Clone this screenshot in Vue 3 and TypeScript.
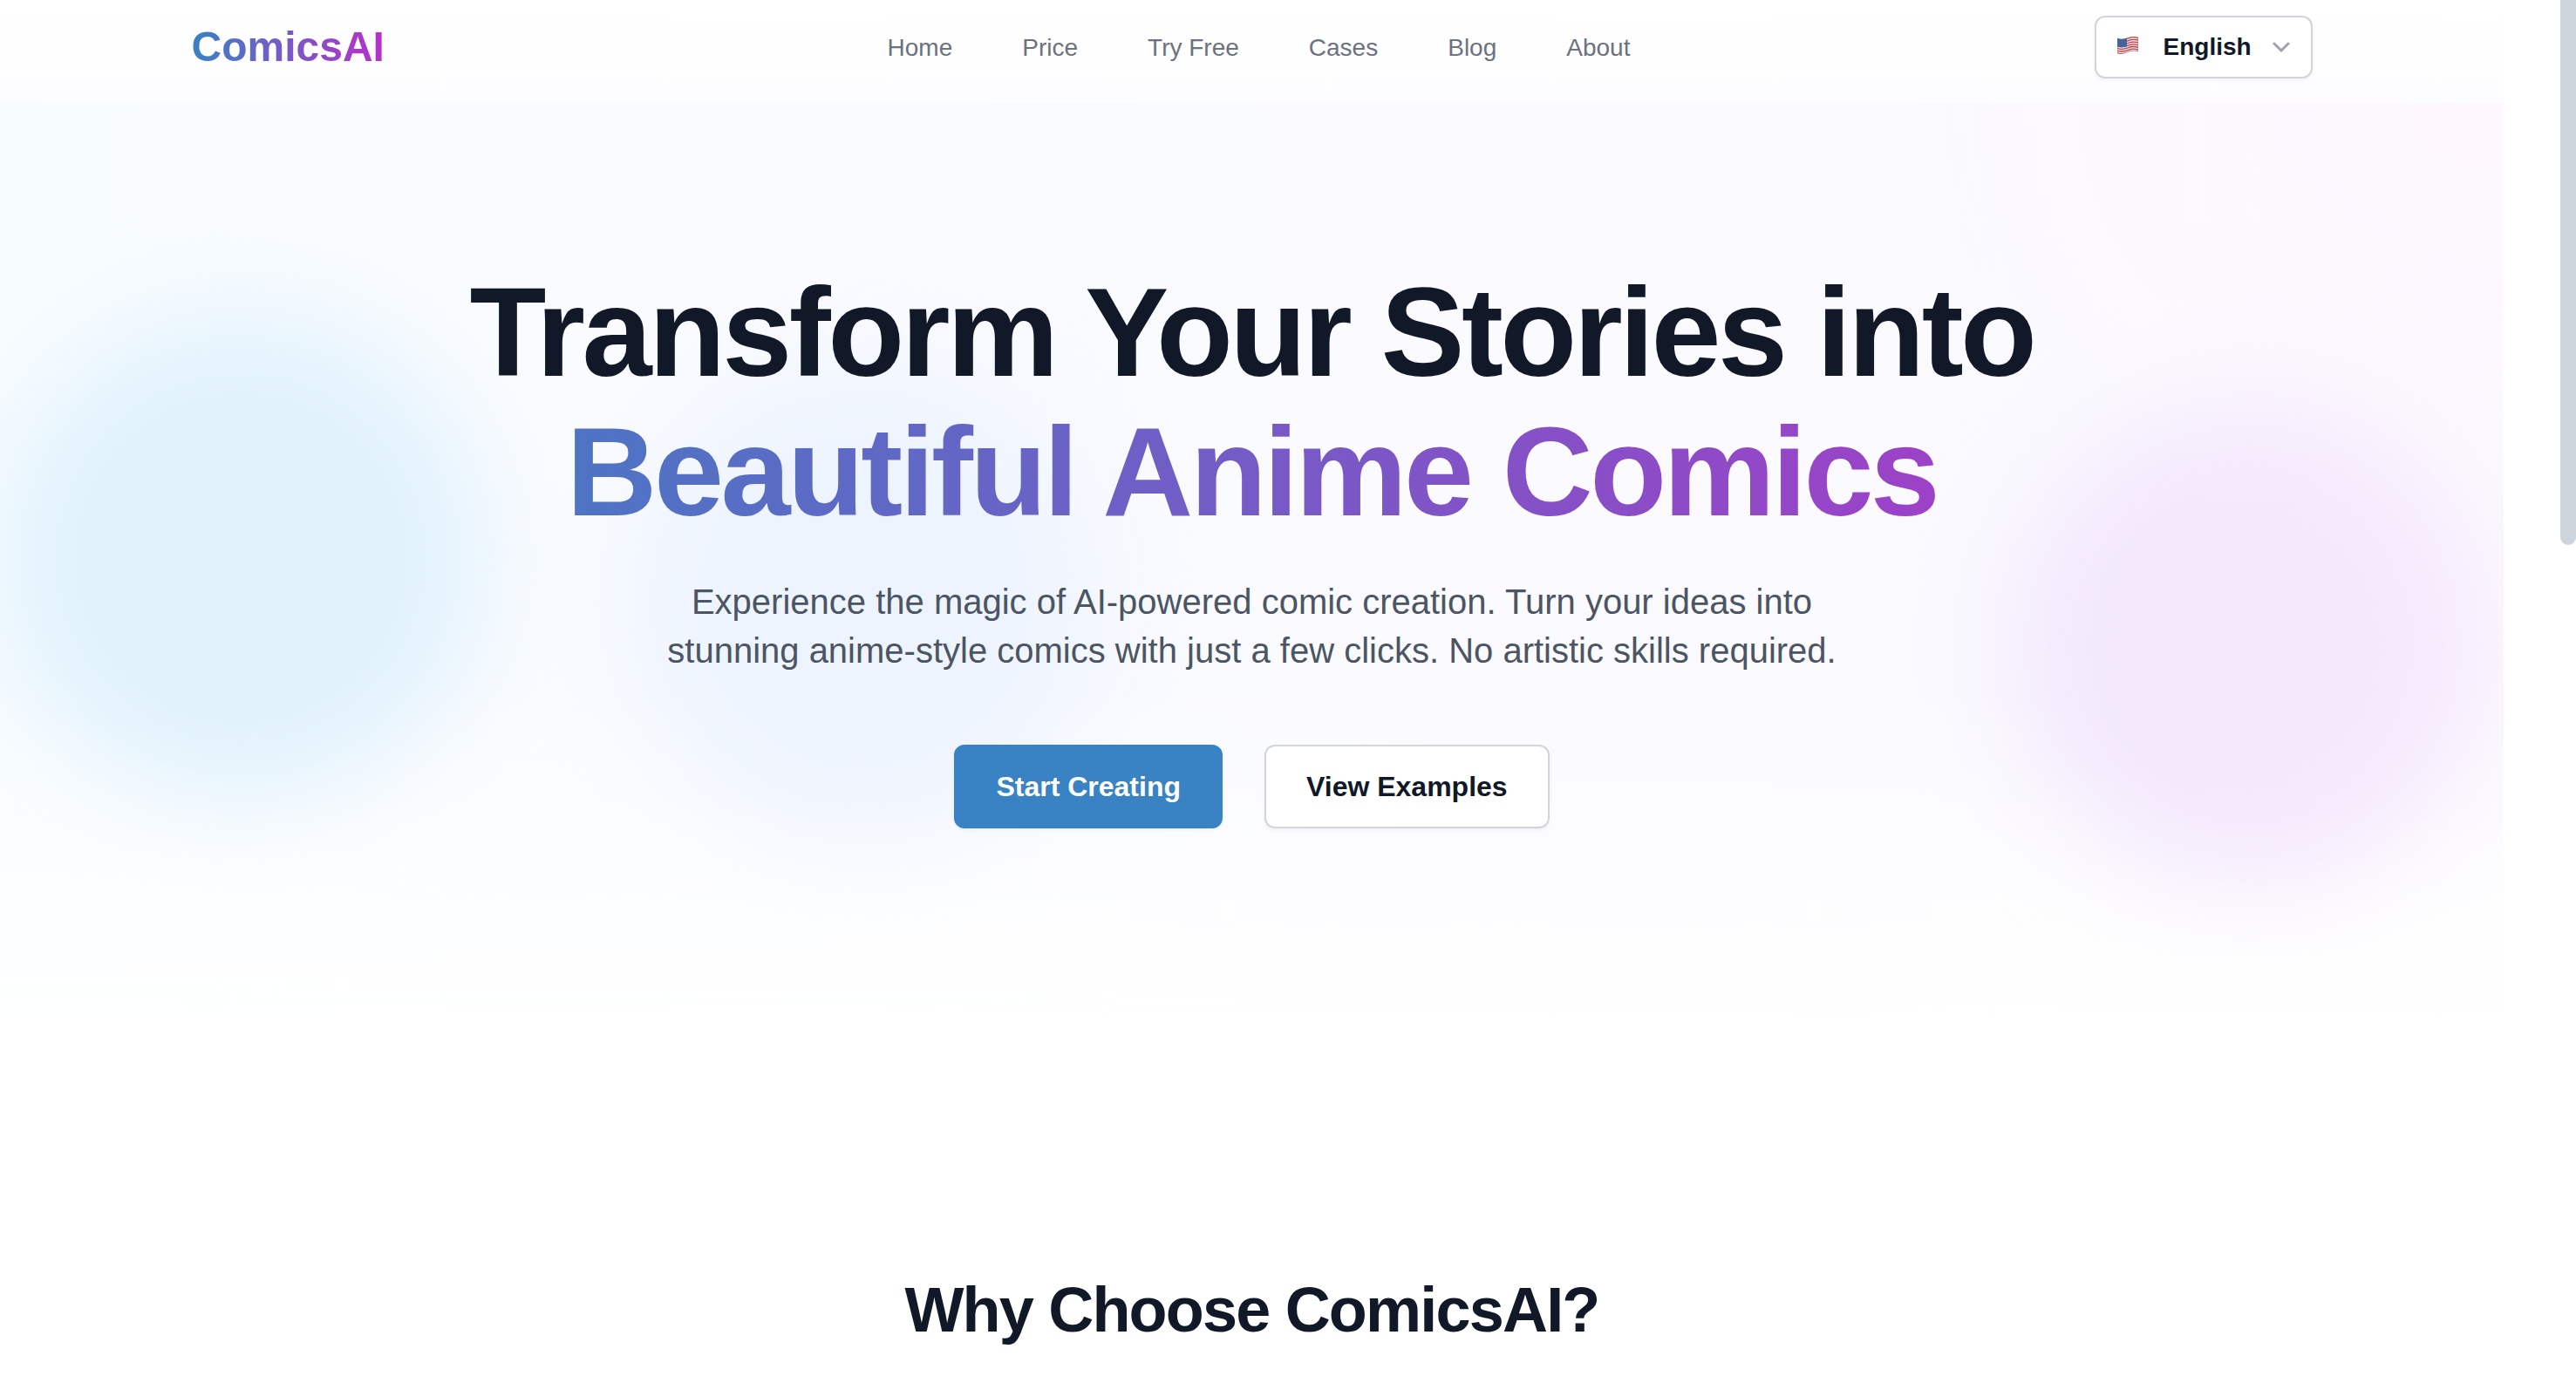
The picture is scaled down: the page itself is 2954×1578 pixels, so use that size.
<script setup lang="ts">
import { ref } from 'vue'

interface NavLink {
  label: string
  href: string
}

const links: NavLink[] = [
  { label: 'Home', href: '#home' },
  { label: 'Price', href: '#price' },
  { label: 'Try Free', href: '#try-free' },
  { label: 'Cases', href: '#cases' },
  { label: 'Blog', href: '#blog' },
  { label: 'About', href: '#about' },
]

const language = ref<string>('en')
const stripes: number[] = [0, 1, 2, 3, 4, 5, 6]
</script>

<template>
  <div class="page">
    <header class="header">
      <div class="bar">
        <a class="logo" href="#home">ComicsAI</a>
        <nav class="nav" aria-label="Main">
          <a v-for="link in links" :key="link.label" :href="link.href">{{ link.label }}</a>
        </nav>
        <label class="language">
          <svg class="flag" viewBox="0 0 24 20" aria-hidden="true">
            <defs>
              <clipPath id="flag-shape">
                <path d="M0 2C4 3.500 8 3 12 1.500S20-.5 24 1V17C20 15.500 16 16 12 17.500S4 20.500 0 19Z" />
              </clipPath>
            </defs>
            <g clip-path="url(#flag-shape)">
              <rect width="24" height="20" fill="#efe6e8" />
              <path
                v-for="n in stripes"
                :key="n"
                :d="`M0 ${2.6 + n * 2.7}C4 ${4.1 + n * 2.7} 8 ${3.6 + n * 2.7} 12 ${2.1 + n * 2.7}S20 ${0.1 + n * 2.7} 24 ${1.6 + n * 2.7}`"
                fill="none"
                stroke="#c9404c"
                stroke-width="1.3"
              />
              <path d="M0 0H11V11.500C7 12.500 4 12.500 0 11.500Z" fill="#41659f" />
            </g>
            <path d="M0 2C4 3.500 8 3 12 1.500S20-.5 24 1V17C20 15.500 16 16 12 17.500S4 20.500 0 19Z" fill="none" stroke="#8a4a55" stroke-opacity=".5" />
          </svg>
          <select v-model="language" aria-label="Language">
            <option value="en">English</option>
          </select>
          <svg class="chevron" viewBox="0 0 20 12" aria-hidden="true">
            <path d="M2 2L10 10L18 2" />
          </svg>
        </label>
      </div>
    </header>

    <main>
      <section class="hero">
        <div class="blob blob-sky"></div>
        <div class="blob blob-indigo"></div>
        <div class="blob blob-pink"></div>
        <div class="hero-content">
          <h1>Transform Your Stories into <span>Beautiful Anime Comics</span></h1>
          <p>
            Experience the magic of AI-powered comic creation. Turn your ideas into stunning
            anime-style comics with just a few clicks. No artistic skills required.
          </p>
          <div class="actions">
            <button type="button" class="button primary">Start Creating</button>
            <button type="button" class="button secondary">View Examples</button>
          </div>
        </div>
      </section>

      <section class="features">
        <h2>Why Choose ComicsAI?</h2>
      </section>
    </main>

    <div class="scroll-thumb" aria-hidden="true"></div>
  </div>
</template>

<style>
body {
  margin: 0;
  background: #ffffff;
}
</style>

<style scoped>
* {
  box-sizing: border-box;
}

.page {
  position: relative;
  min-height: 100vh;
  padding-right: 83px;
  overflow: hidden;
  font-family: 'Liberation Sans', Arial, sans-serif;
  color: #111827;
}

.header {
  background: linear-gradient(to bottom, #ffffff, #fdfdff);
}

.bar {
  display: grid;
  grid-template-columns: 1fr auto 1fr;
  align-items: center;
  max-width: 2560px;
  height: 118px;
  margin: 0 auto;
  padding: 0 64px 10px;
}

.logo {
  justify-self: start;
  font-size: 48px;
  line-height: 64px;
  font-weight: 700;
  text-decoration: none;
  color: transparent;
  background: linear-gradient(to right, #3982c3, #b92fca);
  background-clip: text;
  -webkit-background-clip: text;
}

.nav {
  display: flex;
  gap: 80px;
  margin: 2px 0 0 16px;
}

.nav a {
  font-size: 28px;
  line-height: 40px;
  color: #6b7280;
  text-decoration: none;
}

.language {
  position: relative;
  display: flex;
  align-items: center;
  justify-self: end;
  width: 250px;
  height: 72px;
  padding-left: 24px;
  border: 2px solid #d1d5db;
  border-radius: 12px;
  background: #ffffff;
  box-shadow: 0 2px 4px rgba(0, 0, 0, 0.05);
}

.flag {
  width: 24px;
  height: 20px;
  margin-bottom: 4px;
}

.language select {
  flex: 1;
  height: 68px;
  padding: 0 0 2px 29px;
  border: 0;
  background: transparent;
  appearance: none;
  font-family: inherit;
  font-size: 28px;
  font-weight: 700;
  color: #111827;
}

.chevron {
  position: absolute;
  right: 24px;
  width: 20px;
  height: 12px;
  fill: none;
  stroke: #9ca3af;
  stroke-width: 3;
  stroke-linecap: round;
  stroke-linejoin: round;
  pointer-events: none;
}

.hero {
  position: relative;
  overflow: hidden;
  padding: 184px 64px 240px;
  background:
    linear-gradient(to bottom, rgba(255, 255, 255, 0) 0%, rgba(255, 255, 255, 0) 60%, #ffffff 100%),
    radial-gradient(ellipse 24% 50% at 100% 0%, #fef7fe, rgba(254, 247, 254, 0)),
    linear-gradient(to right, #f7fcff 0%, #f9fbff 25%, #fafaff 60%, #fbf9ff 100%);
}

.blob {
  position: absolute;
  width: 544px;
  height: 544px;
  border-radius: 50%;
  filter: blur(56px);
}

.blob-sky {
  top: 250px;
  left: 4px;
  background: #e0f1fc;
}

.blob-indigo {
  top: 300px;
  left: 25%;
  background: #eef4fe;
}

.blob-pink {
  top: 350px;
  right: 22px;
  background: linear-gradient(to right, #f2e8fc, #f6e8fc);
}

.hero-content {
  position: relative;
  display: flex;
  flex-direction: column;
  align-items: center;
  text-align: center;
}

h1 {
  margin: 0;
  font-size: 144px;
  line-height: 160px;
  font-weight: 700;
  letter-spacing: -0.025em;
}

h1 span {
  display: block;
  color: transparent;
  background: linear-gradient(to right, #4878c4, #a23ec8);
  background-clip: text;
  -webkit-background-clip: text;
}

.hero p {
  max-width: 1408px;
  margin: 40px 0 80px;
  font-size: 40px;
  line-height: 56px;
  color: #4b5563;
}

.actions {
  display: flex;
  gap: 48px;
}

.button {
  height: 96px;
  padding: 0 48px;
  border: 0;
  border-radius: 12px;
  font-family: inherit;
  font-size: 32px;
  font-weight: 700;
  box-shadow: 0 2px 4px rgba(0, 0, 0, 0.05);
}

.primary {
  background: #3982c3;
  color: #ffffff;
}

.secondary {
  background: #ffffff;
  color: #111827;
  box-shadow:
    inset 0 0 0 2px #d1d5db,
    0 2px 4px rgba(0, 0, 0, 0.05);
}

.features {
  padding: 272px 64px 36px;
  text-align: center;
}

h2 {
  margin: 0;
  font-size: 72px;
  line-height: 80px;
  font-weight: 700;
  letter-spacing: -0.025em;
}

.scroll-thumb {
  position: absolute;
  top: 0;
  right: 0;
  width: 18px;
  height: 625px;
  border-radius: 0 0 9px 9px;
  background: #cdd5dd;
}
</style>
